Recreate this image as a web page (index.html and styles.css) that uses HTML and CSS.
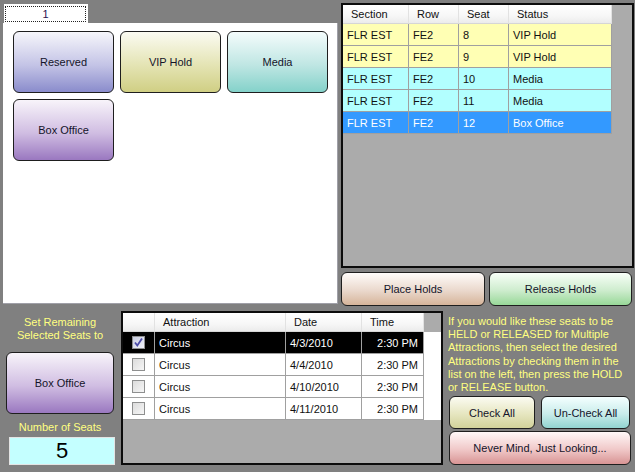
FILE: index.html
```html
<!DOCTYPE html>
<html>
<head>
<meta charset="utf-8">
<title>Holds</title>
<link rel="stylesheet" href="styles.css">
</head>
<body>
<div class="app">
  <div class="top">
    <div class="tabs">
      <div class="tab"><span class="tab-focus">1</span></div>
      <div class="panel">
        <div class="btn-grid">
          <div class="btn big g-reserved">Reserved</div>
          <div class="btn big g-vip">VIP Hold</div>
          <div class="btn big g-media">Media</div>
          <div class="btn big g-box">Box Office</div>
        </div>
      </div>
    </div>
    <div class="right-top">
      <div class="grid seats">
        <div class="row head">
          <div class="cell">Section</div>
          <div class="cell">Row</div>
          <div class="cell">Seat</div>
          <div class="cell">Status</div>
        </div>
        <div class="row r-yellow">
          <div class="cell">FLR EST</div><div class="cell">FE2</div><div class="cell">8</div><div class="cell">VIP Hold</div>
        </div>
        <div class="row r-yellow">
          <div class="cell">FLR EST</div><div class="cell">FE2</div><div class="cell">9</div><div class="cell">VIP Hold</div>
        </div>
        <div class="row r-cyan">
          <div class="cell">FLR EST</div><div class="cell">FE2</div><div class="cell">10</div><div class="cell">Media</div>
        </div>
        <div class="row r-cyan">
          <div class="cell">FLR EST</div><div class="cell">FE2</div><div class="cell">11</div><div class="cell">Media</div>
        </div>
        <div class="row r-sel">
          <div class="cell">FLR EST</div><div class="cell">FE2</div><div class="cell">12</div><div class="cell">Box Office</div>
        </div>
      </div>
      <div class="hold-row">
        <div class="btn g-place w-place">Place Holds</div>
        <div class="btn g-release w-release">Release Holds</div>
      </div>
    </div>
  </div>
  <div class="bottom">
    <div class="set-col">
      <div class="label set-label">Set Remaining<br>Selected Seats to</div>
      <div class="btn big g-box set-btn">Box Office</div>
      <div class="label num-label">Number of Seats</div>
      <div class="numbox">5</div>
    </div>
    <div class="grid attractions">
      <div class="arow head">
        <div class="cell"></div>
        <div class="cell">Attraction</div>
        <div class="cell">Date</div>
        <div class="cell">Time</div>
      </div>
      <div class="arow a-sel">
        <div class="cell chk-cell"><span class="chk checked"><svg width="11" height="11" viewBox="0 0 11 11"><path d="M2 5.5 L4.3 8.5 L9 1.5" fill="none" stroke="#4b4ba8" stroke-width="1.8"/></svg></span></div>
        <div class="cell">Circus</div>
        <div class="cell">4/3/2010</div>
        <div class="cell time">2:30 PM</div>
      </div>
      <div class="arow">
        <div class="cell chk-cell"><span class="chk"></span></div>
        <div class="cell">Circus</div>
        <div class="cell">4/4/2010</div>
        <div class="cell time">2:30 PM</div>
      </div>
      <div class="arow">
        <div class="cell chk-cell"><span class="chk"></span></div>
        <div class="cell">Circus</div>
        <div class="cell">4/10/2010</div>
        <div class="cell time">2:30 PM</div>
      </div>
      <div class="arow">
        <div class="cell chk-cell"><span class="chk"></span></div>
        <div class="cell">Circus</div>
        <div class="cell">4/11/2010</div>
        <div class="cell time">2:30 PM</div>
      </div>
    </div>
    <div class="info-col">
      <div class="label info-text">If you would like these seats to be<br>HELD or RELEASED for Multiple<br>Attractions, then select the desired<br>Attractions by checking them in the<br>list on the left, then press the HOLD<br>or RELEASE button.</div>
      <div class="check-row">
        <div class="btn g-check w-check">Check All</div>
        <div class="btn g-uncheck w-uncheck">Un-Check All</div>
      </div>
      <div class="btn g-never w-never">Never Mind, Just Looking...</div>
    </div>
  </div>
</div>
</body>
</html>
```

FILE: styles.css
```css
* { box-sizing: border-box; }
html, body {
  margin: 0;
  padding: 0;
}
body {
  width: 635px;
  height: 472px;
  background: #808080;
  font-family: "Liberation Sans", Arial, sans-serif;
  font-size: 11px;
  color: #111;
  overflow: hidden;
}
.app {
  width: 635px;
  height: 472px;
}
.top {
  display: flex;
  padding: 3px 0 0 3px;
  gap: 3px;
  height: 306px;
}
.tabs {
  width: 335px;
  display: flex;
  flex-direction: column;
}
.tab {
  margin: 1px 0 0 1px;
  width: 84px;
  height: 19px;
  background: #fff;
  padding: 2px 2px 0 1px;
}
.tab-focus {
  display: block;
  height: 16px;
  border: 1px dotted #222;
  text-align: center;
  line-height: 14px;
  color: #2a1050;
}
.panel {
  width: 335px;
  height: 281px;
  background: #fff;
  border-right: 1px solid #a0a0a8;
  border-bottom: 1px solid #a0a0a8;
  padding: 8px 0 0 10px;
}
.btn-grid {
  display: grid;
  grid-template-columns: 101px 101px 101px;
  grid-auto-rows: 62px;
  column-gap: 6px;
  row-gap: 6px;
}
.btn {
  display: flex;
  align-items: center;
  justify-content: center;
  border: 1px solid #1e1e1e;
  border-radius: 6px;
  color: #14142a;
  white-space: nowrap;
}
.g-reserved { background: linear-gradient(#f6f6fb, #c4c4e6 55%, #8a8ccc); }
.g-vip { background: linear-gradient(#fbfbf2, #e4e4b4 55%, #d0cf84); }
.g-media { background: linear-gradient(#f4fcfc, #bfe6e3 55%, #84d2ca); }
.g-box { background: linear-gradient(#f8f4fa, #d0bde2 55%, #9a78c0); }
.g-place { background: linear-gradient(#fffcfa, #ead8cc 55%, #d6b49a); }
.g-release { background: linear-gradient(#f8fff8, #cdeccd 55%, #98d898); }
.g-check { background: linear-gradient(#fbfbf2, #e6e6c0 55%, #d2d29a); }
.g-uncheck { background: linear-gradient(#f4ffff, #c8ecea 55%, #92d4d0); }
.g-never { background: linear-gradient(#fff8f8, #f0c8c8 55%, #d89494); }

.right-top {
  width: 293px;
  display: flex;
  flex-direction: column;
}
.grid {
  border: 2px solid #0c0c0c;
  background: #ababab;
}
.seats {
  height: 265px;
}
.row {
  display: grid;
  grid-template-columns: 66px 50px 50px 103px;
  height: 22px;
}
.row.head {
  height: 19px;
}
.cell {
  display: flex;
  align-items: center;
  padding-left: 4px;
  border-right: 1px solid #a0a0a0;
  border-bottom: 1px solid #a0a0a0;
  white-space: nowrap;
  overflow: hidden;
}
.head .cell {
  background: linear-gradient(#ffffff, #f7f7f7 60%, #ececec);
  border-right: 1px solid #e2e2e2;
  border-bottom: 1px solid #d6d6d6;
  padding-left: 8px;
  color: #111;
}
.r-yellow .cell { background: #ffffb4; }
.r-cyan .cell { background: #b2ffff; }
.r-sel .cell { background: #3399ff; color: #fff; }

.hold-row {
  display: flex;
  gap: 4px;
  margin-top: 4px;
}
.w-place { width: 144px; height: 34px; }
.w-release { width: 143px; height: 34px; }

.bottom {
  display: flex;
  margin-top: 5px;
  height: 154px;
}
.set-col {
  width: 121px;
  display: flex;
  flex-direction: column;
}
.label {
  color: #ffff80;
  line-height: 13px;
}
.set-label {
  text-align: center;
  margin-top: 5px;
  width: 120px;
}
.set-btn {
  margin: 10px 0 0 6px;
  width: 108px;
  height: 62px;
}
.num-label {
  text-align: center;
  width: 120px;
  margin-top: 7px;
}
.numbox {
  margin: 3px 0 0 9px;
  width: 106px;
  height: 28px;
  background: #c4ffff;
  border: 1px solid #e4e4e4;
  font-size: 22px;
  line-height: 26px;
  text-align: center;
  color: #000;
}

.attractions {
  width: 322px;
  height: 154px;
}
.arow {
  display: grid;
  grid-template-columns: 32px 131px 76px 62px;
  height: 22px;
  background: #fff;
}
.arow.head {
  height: 19px;
  background: transparent;
}
.arow .cell { background: #fff; color: #111; }
.arow.head .cell { background: linear-gradient(#ffffff, #f7f7f7 60%, #ececec); }
.a-sel .cell { background: #000; color: #fff; }
.cell.time {
  justify-content: flex-end;
  padding-right: 5px;
  padding-left: 0;
}
.cell.chk-cell {
  justify-content: center;
  padding-left: 0;
}
.chk {
  width: 13px;
  height: 13px;
  border: 1px solid #8e8f8f;
  background: linear-gradient(135deg, #dcdcdc, #f6f6f6);
  display: flex;
  align-items: center;
  justify-content: center;
}
.chk.checked {
  background: linear-gradient(135deg, #c8cce0, #f0f2fa);
}

.info-col {
  margin-left: 6px;
  width: 183px;
  display: flex;
  flex-direction: column;
}
.info-text {
  margin-top: 4px;
  margin-left: -1px;
  white-space: nowrap;
  line-height: 13.2px;
  height: 81px;
}
.check-row {
  display: flex;
  gap: 6px;
}
.w-check { width: 86px; height: 33px; }
.w-uncheck { width: 89px; height: 33px; }
.w-never { width: 182px; height: 34px; margin-top: 2px; }
```
